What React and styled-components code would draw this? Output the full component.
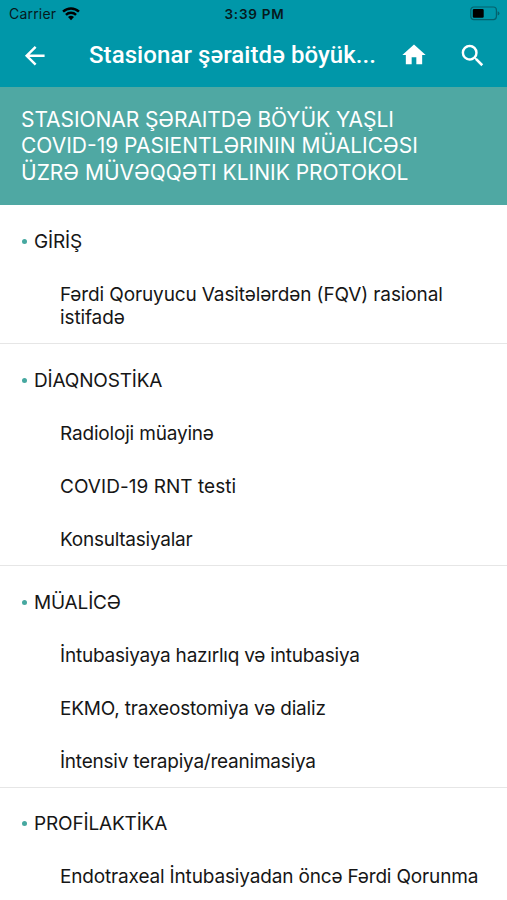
import React from 'react'
import styled, { createGlobalStyle } from 'styled-components'
import { MdArrowBack, MdHome, MdSearch } from 'react-icons/md'

const sections = [
    {
        id: 1,
        title: 'GİRİŞ',
        items: [
            { text: 'Fərdi Qoruyucu Vasitələrdən (FQV) rasional istifadə', tracking: -0.12 },
        ],
    },
    {
        id: 2,
        title: 'DİAQNOSTİKA',
        items: [
            { text: 'Radioloji müayinə', tracking: -0.18 },
            { text: 'COVID-19 RNT testi', tracking: 0.04 },
            { text: 'Konsultasiyalar', tracking: -0.25 },
        ],
    },
    {
        id: 3,
        title: 'MÜALİCƏ',
        items: [
            { text: 'İntubasiyaya hazırlıq və intubasiya', tracking: -0.22 },
            { text: 'EKMO, traxeostomiya və dializ', tracking: -0.18 },
            { text: 'İntensiv terapiya/reanimasiya', tracking: -0.23 },
        ],
    },
    {
        id: 4,
        title: 'PROFİLAKTİKA',
        items: [
            { text: 'Endotraxeal İntubasiyadan öncə Fərdi Qorunma', tracking: -0.16 },
        ],
    },
]

function StatusBar() {
    return (
        <StatusBarStyled>
            <div className="carrier">
                <span>Carrier</span>
                <svg width="18" height="14" viewBox="0 0 18 14">
                    <path d="M0.2 3.8a12.6 12.6 0 0 1 17.6 0l-1.7 1.8a10.2 10.2 0 0 0-14.2 0z" />
                    <path d="M3.1 6.9a8.4 8.4 0 0 1 11.8 0l-1.7 1.8a6 6 0 0 0-8.4 0z" />
                    <path d="M6 10.1a4.3 4.3 0 0 1 6 0L9 13.2z" />
                </svg>
            </div>
            <p className="time">3:39 PM</p>
            <svg className="battery" width="30" height="15" viewBox="0 0 30 15">
                <rect x="0.8" y="1" width="25.6" height="12.6" rx="3" fill="none" stroke="#04616d" strokeWidth="1.2" />
                <rect x="2.8" y="2.9" width="10.9" height="8.8" rx="1.2" fill="#000" />
                <path d="M27.6 5.2q1.9 .6 1.9 2.2t-1.9 2.2z" fill="#04616d" />
            </svg>
        </StatusBarStyled>
    )
}

function App() {
    return (
        <AppStyled>
            <GlobalStyle />
            <StatusBar />
            <NavBarStyled>
                <MdArrowBack className="back" />
                <h1>Stasionar şəraitdə böyük...</h1>
                <MdHome className="home" />
                <MdSearch className="search" />
            </NavBarStyled>
            <BannerStyled>
                <BannerLine $tracking={-0.07}>STASIONAR ŞƏRAITDƏ BÖYÜK YAŞLI</BannerLine>
                <BannerLine>COVID-19 PASIENTLƏRININ MÜALICƏSI</BannerLine>
                <BannerLine>ÜZRƏ MÜVƏQQƏTI KLINIK PROTOKOL</BannerLine>
            </BannerStyled>
            {
                sections.map((section) => {
                    return <SectionStyled key={section.id}>
                        <h2>{section.title}</h2>
                        {section.items.map((item) => (
                            <Item key={item.text} $tracking={item.tracking}>{item.text}</Item>
                        ))}
                    </SectionStyled>
                })
            }
        </AppStyled>
    )
}

const GlobalStyle = createGlobalStyle`
    *{
        box-sizing: border-box;
        margin: 0;
        padding: 0;
    }
    body{
        background: #fff;
        font-family: Inter, 'Liberation Sans', sans-serif;
        overflow: hidden;
    }
`

const AppStyled = styled.div`
    height: 900px;
    overflow: hidden;
    width: 507px;
`

const StatusBarStyled = styled.div`
    align-items: center;
    background: #0097a9;
    color: #06191c;
    display: grid;
    font-size: 14px;
    grid-template-columns: 1fr auto 1fr;
    height: 27px;
    padding: 0 7px 0 9px;
    svg{
        display: block;
        fill: #000;
    }
    .carrier{
        align-items: center;
        display: flex;
        gap: 6px;
        letter-spacing: 0.2px;
    }
    .time{
        font-size: 13.5px;
        font-weight: 600;
        letter-spacing: 0.75px;
    }
    .battery{
        justify-self: end;
    }
`

const NavBarStyled = styled.div`
    align-items: center;
    background: #0097a9;
    color: #fff;
    display: flex;
    height: 59.5px;
    padding: 0 20px 3px;
    h1{
        flex: 1;
        font-family: Roboto, sans-serif;
        font-size: 24px;
        font-weight: 500;
        letter-spacing: 0.07px;
        padding-left: 39.5px;
        white-space: nowrap;
    }
    svg{
        flex: none;
        height: 29.5px;
        width: 29.5px;
    }
    .home{
        height: 28px;
        margin-right: 29.5px;
        width: 28px;
    }
`

const BannerStyled = styled.div`
    background: #4fa8a3;
    color: #fff;
    font-size: 21px;
    height: 118px;
    line-height: 26.5px;
    padding: 20px 21px 0;
    white-space: nowrap;
`

const BannerLine = styled.p`
    letter-spacing: ${({ $tracking = 0 }) => $tracking}px;
`

const SectionStyled = styled.div`
    border-bottom: 1px solid #e6e6e6;
    color: #161616;
    font-size: 19px;
    line-height: 23px;
    padding-top: 10px;
    h2{
        align-items: center;
        display: flex;
        font-size: 19px;
        font-weight: 400;
        letter-spacing: -0.16px;
        padding: 15px 0 15px 22px;
        &::before{
            background: #46a8a0;
            border-radius: 50%;
            content: '';
            height: 5px;
            margin: 1px 7px 0 0;
            width: 5px;
        }
    }
    > :last-child{
        padding-bottom: 14px;
    }
    &:last-child{
        padding-top: 9px;
    }
`

const Item = styled.p`
    letter-spacing: ${({ $tracking }) => $tracking}px;
    padding: 15px 20px 15px 60px;
`

export default App
